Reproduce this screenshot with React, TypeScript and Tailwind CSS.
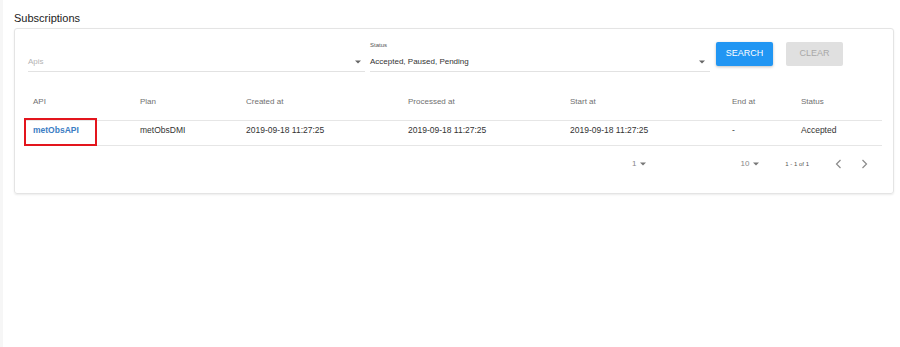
import React from 'react';

const columns = ['API', 'Plan', 'Created at', 'Processed at', 'Start at', 'End at', 'Status'];

const rows = [
  {
    api: 'metObsAPI',
    plan: 'metObsDMI',
    created: '2019-09-18 11:27:25',
    processed: '2019-09-18 11:27:25',
    start: '2019-09-18 11:27:25',
    end: '-',
    status: 'Accepted',
  },
];

const Caret: React.FC<{ className?: string }> = ({ className = '' }) => (
  <svg width="6" height="4" viewBox="0 0 6 4" className={className}>
    <path d="M0 0.5 L6 0.5 L3 3.5 Z" fill="currentColor" />
  </svg>
);

const Chevron: React.FC<{ dir: 'left' | 'right' }> = ({ dir }) => (
  <svg width="7" height="10" viewBox="0 0 7 10">
    <path
      d={dir === 'left' ? 'M5.5 1 L1.5 5 L5.5 9' : 'M1.5 1 L5.5 5 L1.5 9'}
      fill="none"
      stroke="#8a8a8a"
      strokeWidth="1.2"
    />
  </svg>
);

const App: React.FC = () => {
  return (
    <div className="min-h-[347px] bg-white border-l-[3px] border-[#f6f6f6] font-['Liberation_Sans',Arial,sans-serif]">
      <div className="pl-[11px] pr-[6px] pt-[12px]">
        <h1 className="text-[11px] leading-[13px] text-[#222] mb-[3px]">Subscriptions</h1>

        <div className="w-[880px] border border-[#e4e4e4] rounded-[3px] shadow-[0_1px_2px_rgba(0,0,0,0.08)] pl-[9px] pr-[10px] pt-[12px] pb-[11px]">
          {/* filters */}
          <div className="flex items-start pl-[4px]">
            <div className="w-[337px]">
              <div className="h-[8px]" />
              <div className="mt-[8px] pb-[4px] border-b border-[#e2e2e2] flex items-center justify-between">
                <span className="text-[8px] leading-[10px] text-[#b4b4b4]">Apis</span>
                <Caret className="text-[#666] mr-[4px]" />
              </div>
            </div>
            <div className="w-[340px] ml-[5px]">
              <div className="h-[8px] text-[6px] leading-[8px] text-[#555]">Status</div>
              <div className="mt-[8px] pb-[4px] border-b border-[#e2e2e2] flex items-center justify-between">
                <span className="text-[8px] leading-[10px] text-[#333]">Accepted, Paused, Pending</span>
                <Caret className="text-[#666] mr-[5px]" />
              </div>
            </div>
            <button className="ml-[6px] mt-[1px] w-[57px] h-[24px] rounded-[2px] bg-[#2196f3] text-white text-[9px] shadow-[0_1px_3px_rgba(0,0,0,0.25)]">
              SEARCH
            </button>
            <button className="ml-[13px] mt-[1px] w-[57px] h-[24px] rounded-[2px] bg-[#e0e0e0] text-[#a8a8a8] text-[9px]">
              CLEAR
            </button>
          </div>

          {/* table */}
          <div className="mt-[11px] w-[858px]">
            <div className="grid grid-cols-[107px_106px_162px_162px_162px_69px_90px] h-[38px] items-center border-b border-[#e6e6e6]">
              {columns.map((c) => (
                <div key={c} className="pl-[9px] text-[8px] leading-[10px] text-[#707070]">
                  {c}
                </div>
              ))}
            </div>
            {rows.map((r) => (
              <div
                key={r.api}
                className="grid grid-cols-[107px_106px_162px_162px_162px_69px_90px] h-[25px] border-b border-[#e6e6e6] text-[8.5px] leading-[10px] text-[#333]"
              >
                <div className="relative pl-[9px] pt-[4px]">
                  <span className="font-bold text-[#3b7dc4]">{r.api}</span>
                  <div className="absolute left-0 top-[-3px] w-[73px] h-[28px] border-2 border-[#e3151d]" />
                </div>
                <div className="pl-[9px] pt-[4px]">{r.plan}</div>
                <div className="pl-[9px] pt-[4px]">{r.created}</div>
                <div className="pl-[9px] pt-[4px]">{r.processed}</div>
                <div className="pl-[9px] pt-[4px]">{r.start}</div>
                <div className="pl-[9px] pt-[4px]">{r.end}</div>
                <div className="pl-[9px] pt-[4px]">{r.status}</div>
              </div>
            ))}

            {/* pagination */}
            <div className="h-[36px] flex items-center pl-[608px] text-[#888]">
              <div className="flex items-center gap-[4px] text-[8px] leading-[10px]">
                <span>1</span>
                <Caret className="text-[#777]" />
              </div>
              <div className="flex items-center gap-[4px] ml-[94px] text-[8px] leading-[10px]">
                <span>10</span>
                <Caret className="text-[#777]" />
              </div>
              <div className="ml-[26px] text-[6px] leading-[8px] text-[#555]">1 - 1 of 1</div>
              <div className="ml-[26px]">
                <Chevron dir="left" />
              </div>
              <div className="ml-[19px]">
                <Chevron dir="right" />
              </div>
            </div>
          </div>
        </div>
      </div>
    </div>
  );
};

export default App;
